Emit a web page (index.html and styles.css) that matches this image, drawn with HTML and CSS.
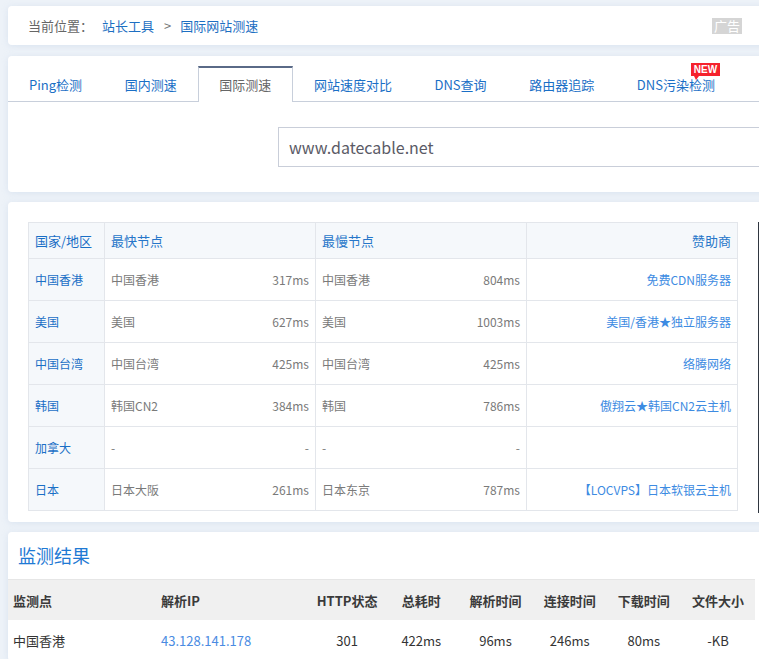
FILE: index.html
```html
<!DOCTYPE html>
<html lang="zh-CN">
<head>
<meta charset="utf-8">
<title>国际网站测速</title>
<link rel="stylesheet" href="styles.css">
</head>
<body>
<div class="page">
  <div class="card crumb">
    <div class="crumb-path">
      <span class="crumb-label">当前位置：</span>
      <a class="crumb-link" href="#">站长工具</a>
      <span class="crumb-sep">&gt;</span>
      <a class="crumb-link" href="#">国际网站测速</a>
    </div>
    <span class="ad">广告</span>
  </div>

  <div class="card tool">
    <ul class="tabs">
      <li class="tab">Ping检测</li>
      <li class="tab">国内测速</li>
      <li class="tab active">国际测速</li>
      <li class="tab">网站速度对比</li>
      <li class="tab">DNS查询</li>
      <li class="tab">路由器追踪</li>
      <li class="tab has-badge">DNS污染检测<span class="badge">NEW</span></li>
    </ul>
    <div class="search">
      <input class="search-input" type="text" value="www.datecable.net">
    </div>
  </div>

  <div class="card summary">
    <table class="nodes">
      <thead>
        <tr>
          <th class="c-country">国家/地区</th>
          <th class="c-node">最快节点</th>
          <th class="c-node">最慢节点</th>
          <th class="c-sponsor">赞助商</th>
        </tr>
      </thead>
      <tbody>
        <tr>
          <td class="c-country">中国香港</td>
          <td class="c-node"><div class="node"><span>中国香港</span><span>317ms</span></div></td>
          <td class="c-node"><div class="node"><span>中国香港</span><span>804ms</span></div></td>
          <td class="c-sponsor"><a href="#">免费CDN服务器</a></td>
        </tr>
        <tr>
          <td class="c-country">美国</td>
          <td class="c-node"><div class="node"><span>美国</span><span>627ms</span></div></td>
          <td class="c-node"><div class="node"><span>美国</span><span>1003ms</span></div></td>
          <td class="c-sponsor"><a href="#">美国/香港★独立服务器</a></td>
        </tr>
        <tr>
          <td class="c-country">中国台湾</td>
          <td class="c-node"><div class="node"><span>中国台湾</span><span>425ms</span></div></td>
          <td class="c-node"><div class="node"><span>中国台湾</span><span>425ms</span></div></td>
          <td class="c-sponsor"><a href="#">络腾网络</a></td>
        </tr>
        <tr>
          <td class="c-country">韩国</td>
          <td class="c-node"><div class="node"><span>韩国CN2</span><span>384ms</span></div></td>
          <td class="c-node"><div class="node"><span>韩国</span><span>786ms</span></div></td>
          <td class="c-sponsor"><a href="#">傲翔云★韩国CN2云主机</a></td>
        </tr>
        <tr>
          <td class="c-country">加拿大</td>
          <td class="c-node"><div class="node"><span>-</span><span>-</span></div></td>
          <td class="c-node"><div class="node"><span>-</span><span>-</span></div></td>
          <td class="c-sponsor"></td>
        </tr>
        <tr>
          <td class="c-country">日本</td>
          <td class="c-node"><div class="node"><span>日本大阪</span><span>261ms</span></div></td>
          <td class="c-node"><div class="node"><span>日本东京</span><span>787ms</span></div></td>
          <td class="c-sponsor"><a href="#">【LOCVPS】日本软银云主机</a></td>
        </tr>
      </tbody>
    </table>
    <div class="edge"></div>
  </div>

  <div class="card results">
    <h2 class="results-title">监测结果</h2>
    <table class="res">
      <thead>
        <tr>
          <th class="r-point">监测点</th>
          <th class="r-ip">解析IP</th>
          <th class="r-num">HTTP状态</th>
          <th class="r-num">总耗时</th>
          <th class="r-num">解析时间</th>
          <th class="r-num">连接时间</th>
          <th class="r-num">下载时间</th>
          <th class="r-num">文件大小</th>
        </tr>
      </thead>
      <tbody>
        <tr>
          <td class="r-point">中国香港</td>
          <td class="r-ip"><a href="#">43.128.141.178</a></td>
          <td class="r-num">301</td>
          <td class="r-num">422ms</td>
          <td class="r-num">96ms</td>
          <td class="r-num">246ms</td>
          <td class="r-num">80ms</td>
          <td class="r-num">-KB</td>
        </tr>
      </tbody>
    </table>
  </div>
</div>
</body>
</html>
```

FILE: styles.css
```css
html, body {
  margin: 0;
  padding: 0;
  overflow: hidden;
}
body {
  background: #edf2f8;
  font-family: "Noto Sans CJK SC", "Noto Sans", sans-serif;
  color: #666;
}
a {
  text-decoration: none;
}
.page {
  width: 770px;
  padding: 6px 0 0 8px;
  display: flex;
  flex-direction: column;
  gap: 11px;
}
.card {
  background: #fff;
  border-radius: 4px;
  box-shadow: 0 1px 6px rgba(180, 200, 225, 0.35);
}

/* breadcrumb */
.crumb {
  height: 39px;
  display: flex;
  align-items: center;
  padding-left: 20px;
  font-size: 13px;
}
.crumb-path {
  display: flex;
  align-items: center;
}
.crumb-label {
  color: #666;
  margin-right: 9px;
}
.crumb-link {
  color: #1d6fc2;
}
.crumb-sep {
  color: #777;
  margin: 0 9px 0 10px;
}
.ad {
  display: inline-block;
  margin-left: auto;
  margin-right: 36px;
  background: #d5d5d5;
  color: #fff;
  font-size: 13px;
  line-height: 16px;
  height: 16px;
  padding: 0 2px;
}

/* tabs */
.tool {
  padding-top: 10px;
  height: 136px;
  box-sizing: border-box;
  overflow: hidden;
}
.tabs {
  list-style: none;
  margin: 0;
  padding: 0;
  display: flex;
  border-bottom: 1px solid #c8cfdb;
}
.tab {
  position: relative;
  padding: 0 20.3px;
  height: 33px;
  line-height: 33px;
  font-size: 13px;
  color: #1a6fc6;
  border-top: 2px solid transparent;
  border-left: 1px solid transparent;
  border-right: 1px solid transparent;
  margin-bottom: -1px;
}
.tab:first-child {
  padding-left: 20px;
}
.tab.active {
  background: #fff;
  color: #666;
  border-top-color: #5a6a87;
  border-left-color: #c8cfdb;
  border-right-color: #c8cfdb;
  height: 34px;
}
.badge {
  position: absolute;
  top: -5px;
  right: 15px;
  background: #f5222d;
  color: #fff;
  font-family: "Liberation Sans", Arial, sans-serif;
  font-weight: bold;
  font-size: 10px;
  line-height: 13px;
  height: 13px;
  padding: 0 3px;
}
.badge::after {
  content: "";
  position: absolute;
  left: 3px;
  bottom: -4px;
  border-left: 2px solid transparent;
  border-right: 3px solid transparent;
  border-top: 4px solid #f5222d;
}
.search {
  padding: 25px 0 0 270px;
}
.search-input {
  box-sizing: border-box;
  width: 520px;
  height: 40px;
  border: 1px solid #c9ced9;
  border-radius: 0;
  padding: 0 10px;
  font-family: "Noto Sans CJK SC", sans-serif;
  font-size: 16px;
  color: #5a5a66;
  outline: none;
  background: #fff;
}

/* summary table */
.summary {
  display: flex;
  padding: 20px 0 11px 20px;
  margin-top: -1px;
}
.nodes {
  border-collapse: collapse;
  width: 710px;
  font-size: 12px;
}
.nodes th,
.nodes td {
  border: 1px solid #e3e6eb;
  padding: 0 6px;
  text-align: left;
  font-weight: normal;
}
.nodes th {
  height: 35px;
  background: #f5f8fb;
  font-size: 13px;
  color: #2676c9;
}
.nodes td {
  height: 41px;
  color: #7a7a7a;
}
.nodes th.c-country {
  width: 63px;
  color: #1a6fc6;
}
.nodes td.c-country {
  background: #f5f8fb;
  color: #1a6fc6;
}
.nodes .c-node {
  width: 198px;
}
.nodes .c-sponsor {
  text-align: right;
}
.nodes .c-sponsor a {
  color: #3d8be2;
}
.node {
  display: flex;
  justify-content: space-between;
}
.edge {
  width: 1px;
  margin-left: 20px;
  margin-bottom: -2px;
  background: #2f3640;
}

/* results */
.results {
  overflow: hidden;
  margin-top: -1px;
}
.results-title {
  margin: 0;
  height: 47px;
  line-height: 46px;
  padding-left: 10px;
  font-size: 18px;
  font-weight: normal;
  color: #1f7ad4;
}
.res {
  border-collapse: collapse;
  font-size: 13px;
  color: #333;
}
.res th {
  height: 40px;
  background: #f0f0f0;
  font-weight: bold;
  color: #3a3a3a;
  border-top: 1px solid #e6e6e6;
}
.res td {
  height: 40px;
  border-bottom: 1px solid #eee;
}
.res th,
.res td {
  padding: 0 5px;
}
.res .r-point {
  width: 138px;
  text-align: left;
}
.res .r-ip {
  width: 144px;
  text-align: left;
}
.res .r-ip a {
  color: #4a8be2;
}
.res .r-num {
  width: 64.2px;
  text-align: center;
}
```
